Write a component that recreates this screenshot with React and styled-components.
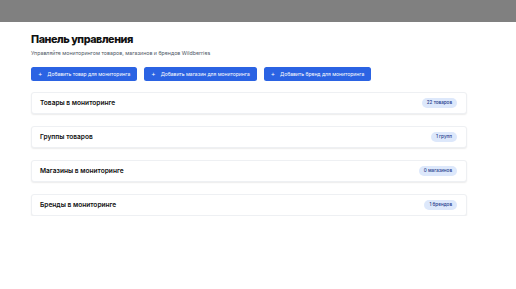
import styled, { createGlobalStyle } from "styled-components";

const Global = createGlobalStyle`
  body {
    margin: 0;
    background: #ffffff;
    font-family: Inter, "Noto Sans", sans-serif;
  }
`;

const TopBar = styled.div`
  height: 22px;
  background: #808080;
`;

const Main = styled.main`
  width: 436px;
  padding: 11px 0 0 31px;
`;

const Title = styled.h1`
  margin: 0;
  font-size: 10.8px;
  line-height: 14px;
  font-weight: 800;
  letter-spacing: -0.45px;
  color: #111111;
`;

const Subtitle = styled.p`
  margin: 3px 0 0;
  font-size: 5.25px;
  line-height: 7px;
  color: #4b5563;
`;

const Actions = styled.div`
  display: flex;
  gap: 7px;
  margin-top: 10px;
`;

const AddButton = styled.button`
  display: flex;
  align-items: center;
  gap: 5px;
  height: 14px;
  padding: 0 7px;
  border: none;
  border-radius: 2.5px;
  background: #2b63e3;
  color: #ffffff;
  font-family: inherit;
  font-size: 5.02px;
  white-space: nowrap;
  span {
    font-size: 6.5px;
    line-height: 1;
  }
`;

const List = styled.div`
  display: flex;
  flex-direction: column;
  gap: 12px;
  margin-top: 11px;
`;

const Card = styled.div`
  display: flex;
  align-items: center;
  justify-content: space-between;
  height: 22px;
  padding: 0 9px 0 8px;
  box-sizing: border-box;
  background: #ffffff;
  border: 1px solid #eef0f3;
  border-radius: 3px;
  box-shadow: 0 1px 1.5px rgba(0, 0, 0, 0.08);
`;

const CardTitle = styled.span`
  font-size: 6.6px;
  font-weight: 600;
  color: #111111;
`;

const Badge = styled.span`
  padding: 1.5px 5px;
  border-radius: 6px;
  background: #dde8fb;
  color: #1e3a8a;
  font-size: 4.6px;
  font-weight: 500;
  line-height: 6.5px;
`;

const buttons = [
  "Добавить товар для мониторинга",
  "Добавить магазин для мониторинга",
  "Добавить бренд для мониторинга",
];

const sections = [
  { title: "Товары в мониторинге", count: "22 товаров" },
  { title: "Группы товаров", count: "1 групп" },
  { title: "Магазины в мониторинге", count: "0 магазинов" },
  { title: "Бренды в мониторинге", count: "1 брендов" },
];

const App = () => (
  <>
    <Global />
    <TopBar />
    <Main>
      <Title>Панель управления</Title>
      <Subtitle>Управляйте мониторингом товаров, магазинов и брендов Wildberries</Subtitle>
      <Actions>
        {buttons.map((label) => (
          <AddButton key={label}>
            <span>+</span>
            {label}
          </AddButton>
        ))}
      </Actions>
      <List>
        {sections.map((s) => (
          <Card key={s.title}>
            <CardTitle>{s.title}</CardTitle>
            <Badge>{s.count}</Badge>
          </Card>
        ))}
      </List>
    </Main>
  </>
);

export default App;
